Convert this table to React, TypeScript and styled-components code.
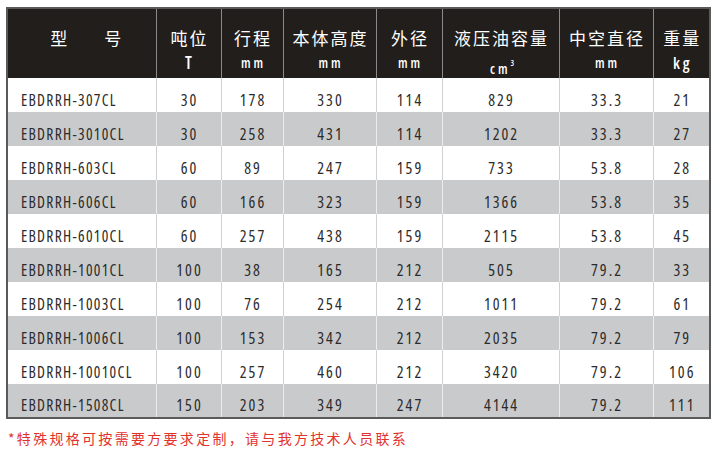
import React from 'react';
import styled, { createGlobalStyle } from 'styled-components';

const GlobalStyle = createGlobalStyle`
  html, body {
    margin: 0;
    padding: 0;
    background: #ffffff;
  }
`;

const Page = styled.div`
  width: 720px;
  height: 454px;
  padding: 7px 0 0 6px;
  box-sizing: border-box;
  font-family: "Open Sans", "Noto Sans CJK SC", sans-serif;
  font-stretch: 75%;
`;

const Table = styled.table`
  border-collapse: collapse;
  border: 2px solid #5a5a5a;
  table-layout: fixed;
  width: 705px;
`;

const HeadCell = styled.th`
  height: 69px;
  padding: 19px 0 0 0;
  box-sizing: border-box;
  background: #221e1b;
  color: #ffffff;
  font-weight: normal;
  text-align: center;
  vertical-align: top;
  border-left: 1px solid #8a8a8a;
  &:first-child {
    border-left: none;
  }
`;

const Title = styled.div`
  font-family: "Noto Sans CJK SC", sans-serif;
  font-size: 17px;
  letter-spacing: 2px;
  line-height: 20px;
  margin-left: 2px;
`;

const ModelTitle = styled(Title)`
  letter-spacing: 0;
  display: flex;
  justify-content: center;
  gap: 37px;
  padding-left: 6px;
`;

const Unit = styled.div<{ $size?: number }>`
  font-family: "Open Sans", sans-serif;
  font-stretch: 75%;
  font-weight: 600;
  font-size: ${p => p.$size ?? 13.5}px;
  letter-spacing: 3px;
  line-height: 18px;
  margin: 6px 0 0 3px;
`;

const Sup = styled.sup`
  font-size: 8px;
  vertical-align: 8px;
  letter-spacing: 0;
`;

const Row = styled.tr<{ $shade: boolean }>`
  background: ${p => (p.$shade ? '#c9cacc' : '#ffffff')};
  td {
    border-left: 1px solid ${p => (p.$shade ? '#ececec' : '#cfd0d2')};
  }
  td:first-child {
    border-left: none;
  }
`;

const Cell = styled.td<{ $left?: boolean }>`
  height: 34px;
  box-sizing: border-box;
  padding: 9px 0 0 ${p => (p.$left ? '13px' : '2px')};
  text-align: ${p => (p.$left ? 'left' : 'center')};
  white-space: nowrap;
  color: #2b2b2b;
  font-size: ${p => (p.$left ? '15.5px' : '16px')};
  letter-spacing: ${p => (p.$left ? '1.3px' : '2px')};
  vertical-align: middle;
`;

const Note = styled.p`
  margin: 9px 0 0 2px;
  color: #e2322c;
  font-family: "Noto Sans CJK SC", sans-serif;
  font-size: 14px;
  letter-spacing: 2.3px;
`;

const widths = [149, 65, 62, 93, 66, 117, 94, 57];

const rows: string[][] = [
  ['EBDRRH-307CL', '30', '178', '330', '114', '829', '33.3', '21'],
  ['EBDRRH-3010CL', '30', '258', '431', '114', '1202', '33.3', '27'],
  ['EBDRRH-603CL', '60', '89', '247', '159', '733', '53.8', '28'],
  ['EBDRRH-606CL', '60', '166', '323', '159', '1366', '53.8', '35'],
  ['EBDRRH-6010CL', '60', '257', '438', '159', '2115', '53.8', '45'],
  ['EBDRRH-1001CL', '100', '38', '165', '212', '505', '79.2', '33'],
  ['EBDRRH-1003CL', '100', '76', '254', '212', '1011', '79.2', '61'],
  ['EBDRRH-1006CL', '100', '153', '342', '212', '2035', '79.2', '79'],
  ['EBDRRH-10010CL', '100', '257', '460', '212', '3420', '79.2', '106'],
  ['EBDRRH-1508CL', '150', '203', '349', '247', '4144', '79.2', '111'],
];

const App = () => (
  <Page>
    <GlobalStyle />
    <Table>
      <colgroup>
        {widths.map((w, i) => <col key={i} style={{ width: w }} />)}
      </colgroup>
      <thead>
        <tr>
          <HeadCell>
            <ModelTitle><span>型</span><span>号</span></ModelTitle>
          </HeadCell>
          <HeadCell><Title>吨位</Title><Unit $size={17}>T</Unit></HeadCell>
          <HeadCell><Title>行程</Title><Unit>mm</Unit></HeadCell>
          <HeadCell><Title>本体高度</Title><Unit>mm</Unit></HeadCell>
          <HeadCell><Title>外径</Title><Unit>mm</Unit></HeadCell>
          <HeadCell><Title>液压油容量</Title><Unit>cm<Sup>3</Sup></Unit></HeadCell>
          <HeadCell><Title>中空直径</Title><Unit>mm</Unit></HeadCell>
          <HeadCell><Title>重量</Title><Unit $size={16}>kg</Unit></HeadCell>
        </tr>
      </thead>
      <tbody>
        {rows.map((r, i) => (
          <Row key={r[0]} $shade={i % 2 === 1}>
            {r.map((v, j) => (
              <Cell key={j} $left={j === 0}>{v}</Cell>
            ))}
          </Row>
        ))}
      </tbody>
    </Table>
    <Note>*特殊规格可按需要方要求定制，请与我方技术人员联系</Note>
  </Page>
);

export default App;
